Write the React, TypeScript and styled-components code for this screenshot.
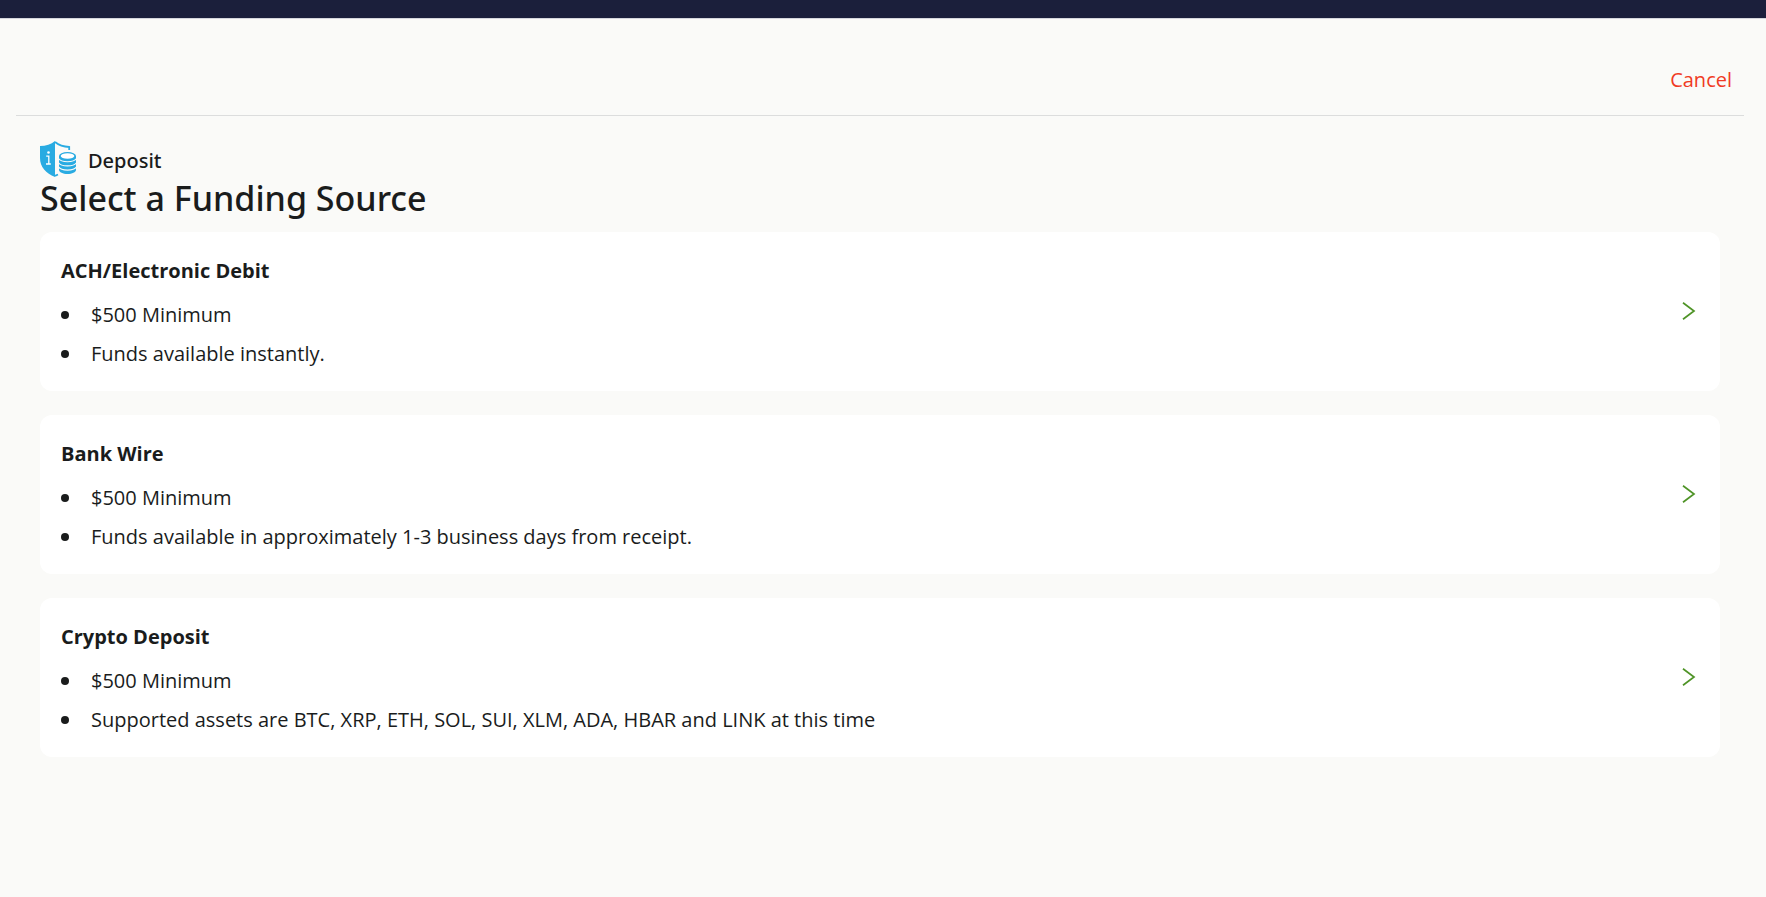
import React from "react";
import styled, { createGlobalStyle } from "styled-components";

const mediumFont = `"Segoe UI", "Noto Sans", sans-serif`;

const GlobalStyle = createGlobalStyle`
  *, *::before, *::after { box-sizing: border-box; }
  body {
    margin: 0;
    background: #fafaf8;
    color: #1a1c1c;
    font-family: "Segoe UI", "Open Sans", "Noto Sans", sans-serif;
    font-size: 20px;
    line-height: 30px;
  }
`;

const Page = styled.div`
  display: flex;
  flex-direction: column;
  min-height: 100vh;
`;

const TopBar = styled.header`
  height: 19px;
  background: #1b1f3b;
  border-bottom: 1px solid #d5d6dc;
`;

const ActionBar = styled.nav`
  display: flex;
  justify-content: flex-end;
  margin: 0 22px 0 16px;
  padding: 46px 12px 20px;
  border-bottom: 1px solid #dcdddd;
`;

const CancelButton = styled.button`
  padding: 0;
  border: 0;
  background: none;
  color: #f03a24;
  font: inherit;
  cursor: pointer;
`;

const Content = styled.main`
  padding: 25px 46px 40px 40px;
`;

const Eyebrow = styled.div`
  display: flex;
  align-items: center;
  gap: 11px;
  height: 36px;
  font-family: ${mediumFont};
  font-weight: 500;

  span { padding-top: 3px; }
`;

const Title = styled.h1`
  margin: 0 0 13px;
  font-family: ${mediumFont};
  font-size: 34px;
  line-height: 42px;
  font-weight: 500;
`;

const SourceList = styled.div`
  display: flex;
  flex-direction: column;
  gap: 24px;
`;

const Card = styled.section`
  display: flex;
  align-items: center;
  justify-content: space-between;
  padding: 17px 20px 18px 21px;
  border-radius: 12px;
  background: #fff;
`;

const CardTitle = styled.h2`
  margin: 0 0 2px;
  font-size: 20px;
  line-height: 44px;
  font-weight: 700;
`;

const Details = styled.ul`
  margin: 0;
  padding: 0;
  list-style: none;
`;

const Detail = styled.li`
  display: flex;
  align-items: center;
  gap: 22px;
  line-height: 39px;

  &::before {
    content: "";
    flex: none;
    width: 8px;
    height: 8px;
    border-radius: 50%;
    background: #1a1c1c;
  }
`;

const OpenButton = styled.button`
  display: flex;
  padding: 4px;
  border: 0;
  background: none;
  color: #4f9427;
  cursor: pointer;
`;

const sources = [
  { name: "ACH/Electronic Debit", details: ["$500 Minimum", "Funds available instantly."] },
  {
    name: "Bank Wire",
    details: ["$500 Minimum", "Funds available in approximately 1-3 business days from receipt."],
  },
  {
    name: "Crypto Deposit",
    details: [
      "$500 Minimum",
      "Supported assets are BTC, XRP, ETH, SOL, SUI, XLM, ADA, HBAR and LINK at this time",
    ],
  },
];

const DepositIcon = () => (
  <svg width="37" height="36" viewBox="0 0 37 36" aria-hidden="true">
    <path d="M15 0C11 3.500 6 5 0 5v12c0 9 6 15.500 15 19z" fill="#29abe2" />
    <path d="M15 1c4 3.300 9 4.800 14.200 5v3M15 34.800l3-1.300" fill="none" stroke="#29abe2" strokeWidth="1.800" />
    <circle cx="8.500" cy="11.500" r="1.300" fill="#fff" />
    <path d="M6.200 15.200h2.600v7.600M6 23h4.800" fill="none" stroke="#fff" strokeWidth="1.300" />
    <path d="M19 15v14c0 2.200 4 4 8.500 4s8.500-1.800 8.500-4V15z" fill="#29abe2" />
    <ellipse cx="27.500" cy="15" rx="8.500" ry="4" fill="#29abe2" />
    <ellipse cx="27.500" cy="15" rx="6.800" ry="2.800" fill="#fff" />
    <path
      d="M18.500 17.500c1.500 2.300 5 3.200 9 3.200s7.500-.9 9-3.200M18.500 21.700c1.500 2.300 5 3.200 9 3.200s7.500-.9 9-3.200M18.500 25.900c1.500 2.300 5 3.200 9 3.200s7.500-.9 9-3.200"
      fill="none"
      stroke="#fafaf8"
      strokeWidth="1.100"
    />
  </svg>
);

const Chevron = () => (
  <svg width="14" height="18" viewBox="0 0 14 18" aria-hidden="true">
    <path d="M1 0.800L12 9L1 17.200" fill="none" stroke="currentColor" strokeWidth="1.700" />
  </svg>
);

export default function App() {
  return (
    <>
      <GlobalStyle />
      <Page>
        <TopBar />
        <ActionBar>
          <CancelButton type="button">Cancel</CancelButton>
        </ActionBar>
        <Content>
          <Eyebrow>
            <DepositIcon />
            <span>Deposit</span>
          </Eyebrow>
          <Title>Select a Funding Source</Title>
          <SourceList>
            {sources.map((source) => (
              <Card key={source.name}>
                <div>
                  <CardTitle>{source.name}</CardTitle>
                  <Details>
                    {source.details.map((text) => (
                      <Detail key={text}>{text}</Detail>
                    ))}
                  </Details>
                </div>
                <OpenButton type="button" aria-label={`Choose ${source.name}`}>
                  <Chevron />
                </OpenButton>
              </Card>
            ))}
          </SourceList>
        </Content>
      </Page>
    </>
  );
}
